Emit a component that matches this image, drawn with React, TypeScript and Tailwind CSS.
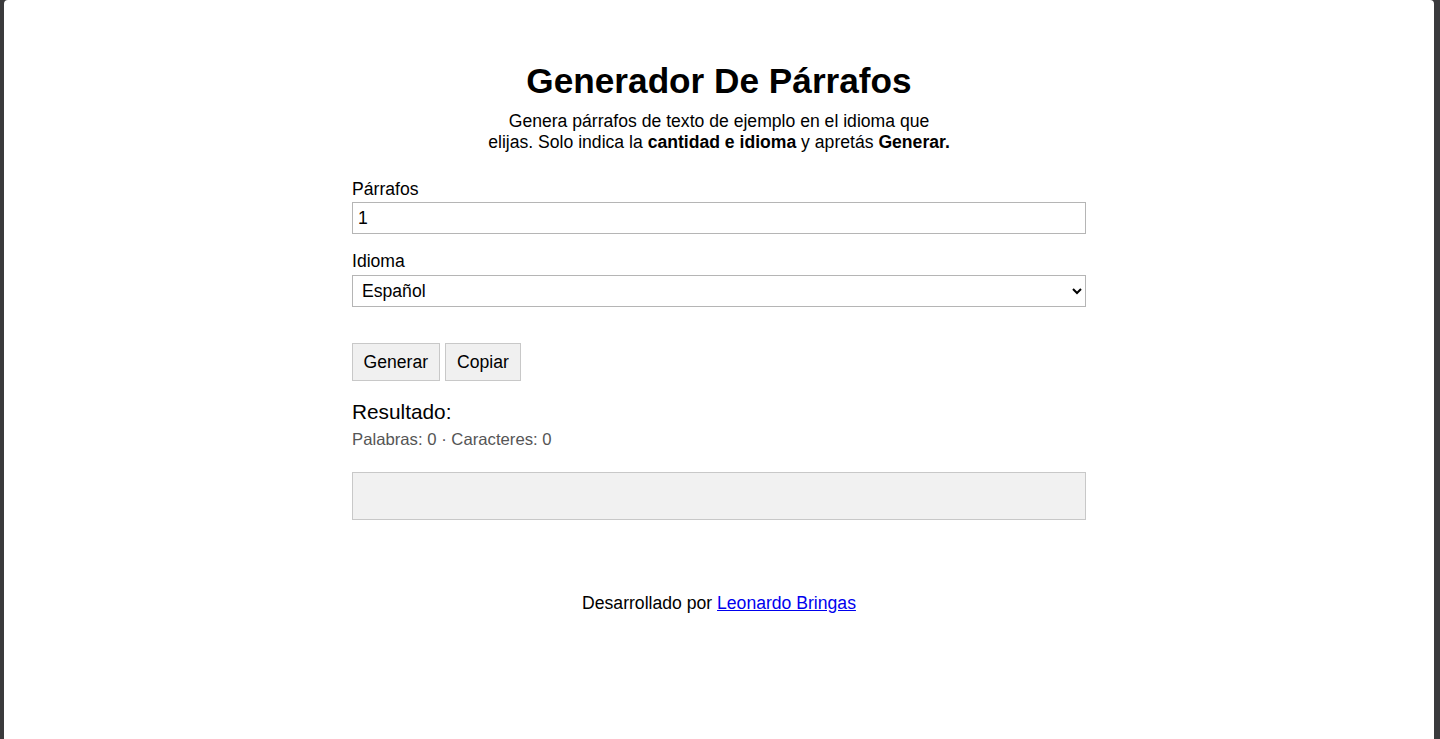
import { useState } from "react";

export default function App() {
  const [count, setCount] = useState("1");
  const [lang, setLang] = useState("es");

  return (
    <div className="min-h-screen bg-[#3a3a3c] pl-[4px] pr-[6px] font-['Liberation_Sans',Arial,sans-serif] text-[17.6px] text-black">
      <div className="min-h-[739px] rounded-t-[4px] bg-white">
        <main className="mx-auto w-[734px] pt-[61px]">
          <h1 className="text-center text-[35.2px] font-bold leading-[40px]">Generador De Párrafos</h1>
          <p className="mx-auto mt-[10px] max-w-[466px] text-center leading-[20.6px]">
            Genera párrafos de texto de ejemplo en el idioma que elijas. Solo indica la{" "}
            <strong className="font-bold">cantidad e idioma</strong> y apretás <strong className="font-bold">Generar.</strong>
          </p>

          <form className="mt-[27px]" onSubmit={(e) => e.preventDefault()}>
            <label htmlFor="parrafos" className="block leading-[20px]">
              Párrafos
            </label>
            <input
              id="parrafos"
              type="number"
              min={1}
              value={count}
              onChange={(e) => setCount(e.target.value)}
              className="mt-[3px] block h-[32px] w-full border border-[#b5b5b5] bg-white px-[5px] [appearance:textfield] outline-none [&::-webkit-inner-spin-button]:appearance-none [&::-webkit-outer-spin-button]:appearance-none"
            />

            <label htmlFor="idioma" className="mt-[17px] block leading-[20px]">
              Idioma
            </label>
            <select
              id="idioma"
              value={lang}
              onChange={(e) => setLang(e.target.value)}
              className="mt-[4px] block h-[32px] w-full border border-[#b5b5b5] bg-white pl-[5px] pr-[4px] outline-none"
            >
              <option value="es">Español</option>
              <option value="en">Inglés</option>
              <option value="pt">Portugués</option>
              <option value="fr">Francés</option>
            </select>

            <div className="mt-[36px] flex gap-[5px]">
              <button type="submit" className="border border-[#c8c8c8] bg-[#f0f0f0] px-[10.5px] py-[8px] leading-[20px]">
                Generar
              </button>
              <button type="button" className="border border-[#c8c8c8] bg-[#f0f0f0] px-[11.5px] py-[8px] leading-[20px]">
                Copiar
              </button>
            </div>
          </form>

          <h2 className="mt-[19px] text-[20.8px] font-normal leading-[24px]">Resultado:</h2>
          <p className="mt-[6px] text-[16.72px] leading-[19px] text-[#555555]">Palabras: 0 · Caracteres: 0</p>
          <div className="mt-[23px] h-[48px] border border-[#c8c8c8] bg-[#f1f1f1]" />

          <footer className="mt-[73px] text-center leading-[20px]">
            Desarrollado por{" "}
            <a href="#" className="text-[#0000ee] underline">
              Leonardo Bringas
            </a>
          </footer>
        </main>
      </div>
    </div>
  );
}
